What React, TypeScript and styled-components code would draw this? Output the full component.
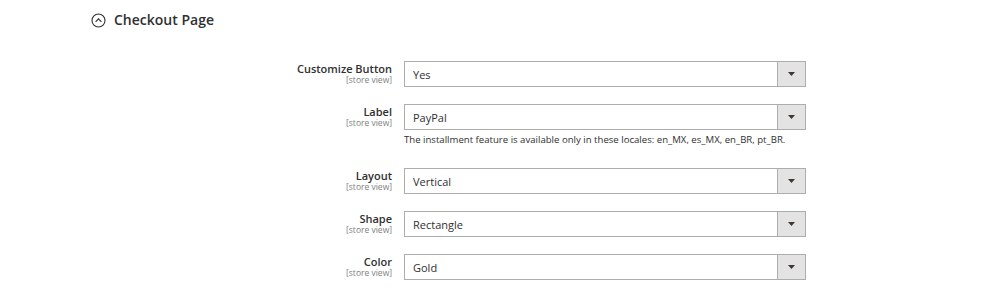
import React from "react";
import styled, { createGlobalStyle } from "styled-components";

const Global = createGlobalStyle`
  html, body { margin: 0; padding: 0; background: #fff; }
  body { font-family: "Open Sans", "Liberation Sans", sans-serif; color: #303030; }
`;

const Page = styled.div`
  width: 1000px;
  height: 293px;
  overflow: hidden;
  background: #fff;
`;

const SectionHeader = styled.div`
  display: flex;
  align-items: center;
  gap: 8px;
  padding: 11px 0 0 91px;
  height: 18px;
`;

const Title = styled.span`
  font-size: 14px;
  font-weight: 600;
  color: #303030;
  line-height: 18px;
`;

const Form = styled.div`
  display: flex;
  flex-direction: column;
  gap: 17px;
  padding-top: 32px;
`;

const Row = styled.div`
  display: grid;
  grid-template-columns: 392px 402px;
  column-gap: 12px;
  align-items: start;
`;

const LabelCol = styled.div`
  display: flex;
  flex-direction: column;
  align-items: flex-end;
  padding-top: 2px;
`;

const LabelText = styled.span`
  font-size: 11px;
  font-weight: 600;
  line-height: 12px;
  color: #303030;
`;

const Scope = styled.span`
  font-size: 8.5px;
  line-height: 10px;
  color: #808080;
`;

const Control = styled.div`
  display: flex;
  flex-direction: column;
`;

const SelectBox = styled.div`
  display: flex;
  height: 26px;
  box-sizing: border-box;
  border: 1px solid #adadad;
  background: #fff;
`;

const Value = styled.span`
  flex: 1;
  padding-left: 8px;
  font-size: 11px;
  line-height: 25px;
  color: #303030;
`;

const ArrowBox = styled.span`
  width: 27px;
  border-left: 1px solid #adadad;
  background: #e3e3e3;
  display: flex;
  align-items: center;
  justify-content: center;
`;

const Note = styled.div`
  font-size: 9.6px;
  line-height: 15px;
  color: #303030;
  margin-top: 2px;
  margin-bottom: 4px;
`;

const Arrow = () => (
  <svg width="7" height="4" viewBox="0 0 7 4">
    <path d="M0 0 H7 L3.5 4 Z" fill="#41362f" />
  </svg>
);

const CollapseIcon = () => (
  <svg width="15" height="15" viewBox="0 0 15 15">
    <circle cx="7.5" cy="7.5" r="6.5" fill="none" stroke="#303030" strokeWidth="1.1" />
    <path d="M4.6 8.8 L7.5 5.9 L10.4 8.8" fill="none" stroke="#303030" strokeWidth="1.2" />
  </svg>
);

const rows: { label: string; value: string; note?: string }[] = [
  { label: "Customize Button", value: "Yes" },
  {
    label: "Label",
    value: "PayPal",
    note: "The installment feature is available only in these locales: en_MX, es_MX, en_BR, pt_BR.",
  },
  { label: "Layout", value: "Vertical" },
  { label: "Shape", value: "Rectangle" },
  { label: "Color", value: "Gold" },
];

export default function App() {
  return (
    <Page>
      <Global />
      <SectionHeader>
        <CollapseIcon />
        <Title>Checkout Page</Title>
      </SectionHeader>
      <Form>
        {rows.map((r) => (
          <Row key={r.label}>
            <LabelCol>
              <LabelText>{r.label}</LabelText>
              <Scope>[store view]</Scope>
            </LabelCol>
            <Control>
              <SelectBox>
                <Value>{r.value}</Value>
                <ArrowBox>
                  <Arrow />
                </ArrowBox>
              </SelectBox>
              {r.note && <Note>{r.note}</Note>}
            </Control>
          </Row>
        ))}
      </Form>
    </Page>
  );
}
